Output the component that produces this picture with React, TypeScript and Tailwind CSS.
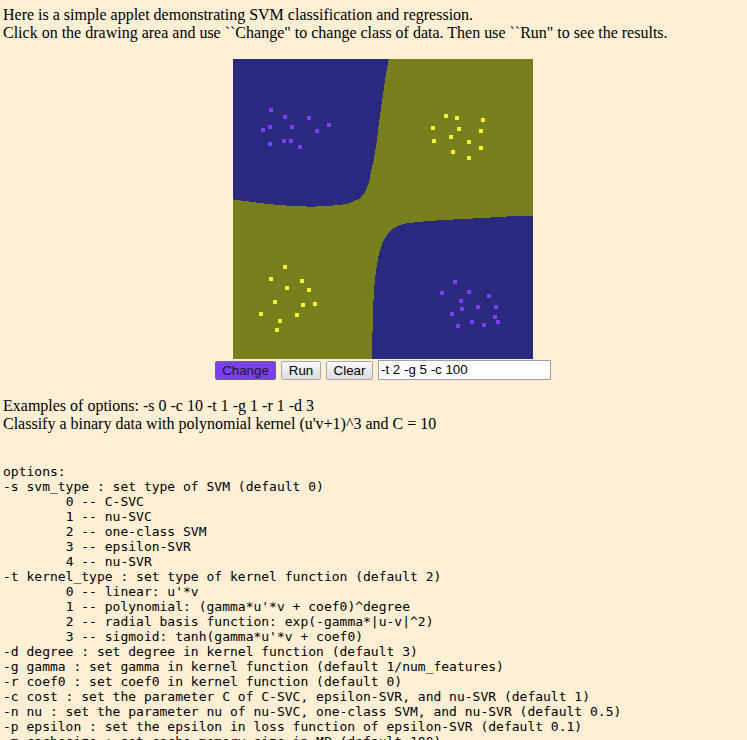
import React from "react";

const purple: [number, number][] = [
  [36, 49], [50, 56], [74, 57], [28, 69], [35, 66], [57, 66], [82, 70], [94, 64], [35, 83], [49, 80], [56, 80], [65, 86],
  [220, 221], [207, 232], [234, 231], [254, 235], [226, 240], [227, 248], [243, 246], [261, 246], [217, 253], [260, 256], [237, 261], [263, 261], [223, 265], [249, 264],
];
const yellow: [number, number][] = [
  [211, 55], [222, 57], [248, 59], [198, 67], [224, 68], [246, 70], [216, 76], [199, 80], [234, 81], [246, 87], [218, 91], [234, 97],
  [50, 206], [36, 218], [67, 220], [52, 227], [74, 229], [40, 241], [68, 244], [80, 243], [26, 253], [62, 254], [45, 260], [42, 269],
];

const topLeft =
  "M0,0 L155.7,0 L153,15 L151,29 L148.5,46 L146,63 L143.7,83 L140.3,103 L138,112 L136.3,122.7 L132,133.3 L127,139.3 L120,142.7 L113.7,145 L107,146 L92,147 L80,147.7 L58.7,147 L47,146 L35,145 L27,144 L17,142.7 L9,141.7 L0,140.3 Z";
const bottomRight =
  "M300,156.7 L289,156.7 L270,157.7 L250,159 L230,160 L210,161 L195,162 L185,163 L174,164.3 L167,166 L160,169.3 L155,174.3 L151,181 L148.7,186 L146,194.3 L144.3,204.3 L142.7,214.3 L141.3,227.7 L140.3,244.3 L139.7,262.7 L139,300 L300,300 Z";

const optionsText = `options:
-s svm_type : set type of SVM (default 0)
\t0 -- C-SVC
\t1 -- nu-SVC
\t2 -- one-class SVM
\t3 -- epsilon-SVR
\t4 -- nu-SVR
-t kernel_type : set type of kernel function (default 2)
\t0 -- linear: u'*v
\t1 -- polynomial: (gamma*u'*v + coef0)^degree
\t2 -- radial basis function: exp(-gamma*|u-v|^2)
\t3 -- sigmoid: tanh(gamma*u'*v + coef0)
-d degree : set degree in kernel function (default 3)
-g gamma : set gamma in kernel function (default 1/num_features)
-r coef0 : set coef0 in kernel function (default 0)
-c cost : set the parameter C of C-SVC, epsilon-SVR, and nu-SVR (default 1)
-n nu : set the parameter nu of nu-SVC, one-class SVM, and nu-SVR (default 0.5)
-p epsilon : set the epsilon in loss function of epsilon-SVR (default 0.1)
-m cachesize : set cache memory size in MB (default 100)
-e epsilon : set tolerance of termination criterion (default 0.001)`;

export default function App() {
  return (
    <div className="h-[740px] overflow-hidden bg-[#ffefd5] text-black">
      <div className="pl-[3px] pt-[6px] font-['Liberation_Serif',serif] text-[16px] leading-[18px]">
        <div>Here is a simple applet demonstrating SVM classification and regression.</div>
        <div>
          Click on the drawing area and use ``Change" to change class of data. Then use ``Run" to see the results.
        </div>
      </div>

      <div className="mt-[17px] ml-[233px] h-[300px] w-[300px]">
        <svg width="300" height="300" viewBox="0 0 300 300" shapeRendering="crispEdges" className="block">
          <rect x="0" y="0" width="300" height="300" fill="#78801e" />
          <path d={topLeft} fill="#29297d" />
          <path d={bottomRight} fill="#29297d" />
          {purple.map(([x, y], i) => (
            <rect key={"p" + i} x={x} y={y} width="4" height="4" fill="#7b3ff5" />
          ))}
          {yellow.map(([x, y], i) => (
            <rect key={"y" + i} x={x} y={y} width="4" height="4" fill="#f5f532" />
          ))}
        </svg>
      </div>

      <div className="ml-[215px] mt-[1px] flex h-[20px] items-end gap-[5px] font-['Liberation_Sans',Arial,sans-serif] text-[13.33px]">
        <button className="flex h-[19px] w-[61px] items-center justify-center rounded-[2px] border border-[#6a6a6a] bg-[#7b3ff5] leading-none text-[#1a1a1a]">
          Change
        </button>
        <button className="flex h-[19px] w-[40px] items-center justify-center rounded-[2px] border border-[#a8a8a8] bg-gradient-to-b from-[#fafafa] to-[#dcdcdc] leading-none">
          Run
        </button>
        <button className="flex h-[19px] w-[47px] items-center justify-center rounded-[2px] border border-[#a8a8a8] bg-gradient-to-b from-[#fafafa] to-[#dcdcdc] leading-none">
          Clear
        </button>
        <div className="flex h-[20px] w-[173px] items-center border border-[#a0a0a0] bg-white pl-[2px] leading-none">
          -t 2 -g 5 -c 100
        </div>
      </div>

      <div className="mt-[17px] pl-[3px] font-['Liberation_Serif',serif] text-[16px] leading-[18px]">
        <div>Examples of options: -s 0 -c 10 -t 1 -g 1 -r 1 -d 3</div>
        <div>Classify a binary data with polynomial kernel (u'v+1)^3 and C = 10</div>
      </div>

      <pre className="mt-[31px] whitespace-pre pl-[3px] font-['DejaVu_Sans_Mono',monospace] text-[13px] leading-[15px] [tab-size:8]">
        {optionsText}
      </pre>
    </div>
  );
}
